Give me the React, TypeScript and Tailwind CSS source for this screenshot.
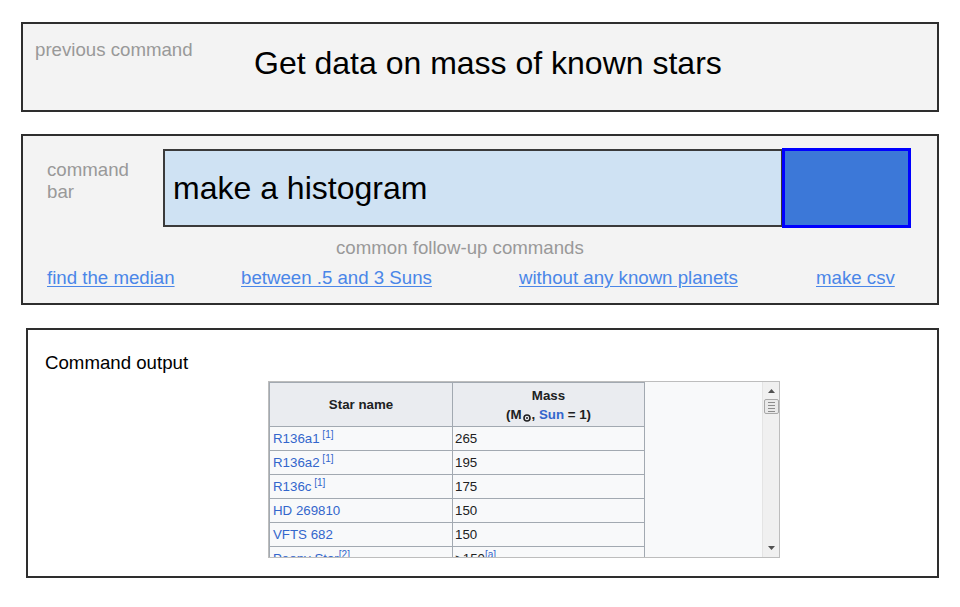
import React from "react";

const stars = [
  { name: "R136a1", ref: " [1]", mass: "265", note: "" },
  { name: "R136a2", ref: " [1]", mass: "195", note: "" },
  { name: "R136c", ref: " [1]", mass: "175", note: "" },
  { name: "HD 269810", ref: "", mass: "150", note: "" },
  { name: "VFTS 682", ref: "", mass: "150", note: "" },
  { name: "Peony Star", ref: "[2]", mass: ">150", note: "[a]" },
];

function Scrollbar() {
  return (
    <div className="w-[17px] bg-[#f0f0f0] border-l border-[#e4e4e4] flex flex-col items-center">
      <svg className="mt-[7px]" width="7" height="4" viewBox="0 0 7 4">
        <path d="M0 4 L3.5 0 L7 4 Z" fill="#505050" />
      </svg>
      <div className="mt-[6px] w-[15px] h-[15px] rounded-[2px] border border-[#a8a8a8] bg-[#e9e9e9] flex flex-col items-center justify-center gap-[2px]">
        <div className="w-[7px] h-px bg-[#8c8c8c]" />
        <div className="w-[7px] h-px bg-[#8c8c8c]" />
        <div className="w-[7px] h-px bg-[#8c8c8c]" />
        <div className="w-[7px] h-px bg-[#8c8c8c]" />
      </div>
      <div className="flex-1" />
      <svg className="mb-[7px]" width="7" height="4" viewBox="0 0 7 4">
        <path d="M0 0 L3.5 4 L7 0 Z" fill="#505050" />
      </svg>
    </div>
  );
}

function StarTable() {
  return (
    <div className="w-[376px] border-l border-t border-[#a2a9b1] text-[13.3px] text-[#202122]">
      {/* HEADER */}
      <div className="flex h-[44px] bg-[#eaecf0] border-b border-[#a2a9b1] font-bold">
        <div className="w-[183px] border-r border-[#a2a9b1] flex items-center justify-center">
          Star name
        </div>
        <div className="w-[192px] border-r border-[#a2a9b1] flex flex-col items-center justify-center leading-[19px]">
          <span>Mass</span>
          <span>
            (M
            {/* sun symbol */}
            <svg className="inline-block relative top-[3px] mx-px" width="8" height="8" viewBox="0 0 8 8">
              <circle cx="4" cy="4" r="3" fill="none" stroke="#202122" strokeWidth="1.6" />
              <circle cx="4" cy="4" r="1" fill="#202122" />
            </svg>
            , <span className="text-[#3366cc]">Sun</span> = 1)
          </span>
        </div>
      </div>

      {/* ROWS */}
      {stars.map((s) => (
        <div key={s.name} className="flex h-[24px] bg-[#f8f9fa] border-b border-[#a2a9b1]">
          <div className="w-[183px] border-r border-[#a2a9b1] pl-[3px] pt-[4px] leading-[16px] text-[#3366cc] whitespace-pre">
            {s.name}
            <span className="text-[10px] relative -top-[5px]">{s.ref}</span>
          </div>
          <div className="w-[192px] border-r border-[#a2a9b1] pl-[2px] pt-[4px] leading-[16px]">
            {s.mass}
            <span className="text-[10px] relative -top-[5px] text-[#3366cc]">{s.note}</span>
          </div>
        </div>
      ))}
    </div>
  );
}

export default function App() {
  const links = [
    { label: "find the median", w: "w-[194px]" },
    { label: "between .5 and 3 Suns", w: "w-[278px]" },
    { label: "without any known planets", w: "w-[297px]" },
    { label: "make csv", w: "" },
  ];

  return (
    <div className="w-[960px] h-[607px] bg-white pt-[22px] flex flex-col font-['Liberation_Sans',Arial,sans-serif] overflow-hidden">
      {/* PREVIOUS COMMAND */}
      <div className="ml-[21px] w-[918px] h-[90px] bg-[#f3f3f3] border-2 border-[#2e2e2e] flex items-start">
        <div className="ml-[12px] w-[219px] pt-[15px] text-[18.67px] leading-[22px] text-[#999999]">
          previous command
        </div>
        <div className="pt-[21px] text-[32px] leading-[36px] text-black">
          Get data on mass of known stars
        </div>
      </div>

      {/* COMMAND BAR */}
      <div className="mt-[22px] ml-[21px] w-[918px] h-[171px] bg-[#f3f3f3] border-2 border-[#2e2e2e] pt-[12px] text-[18.67px] leading-[22px]">
        <div className="flex items-center">
          <div className="self-start mt-[11px] ml-[24px] w-[116px] text-[#999999]">
            command
            <br />
            bar
          </div>
          <div className="w-[620px] h-[78px] bg-[#cfe2f3] border-2 border-[#3a3a3a] pl-[8px] flex items-center text-[32px] leading-[36px] text-black">
            make a histogram
          </div>
          <div className="-ml-[1px] w-[129px] h-[80px] bg-[#3c78d8] border-[3px] border-[#0000ff]" />
        </div>

        <div className="mt-[9px] ml-[313px] text-[#999999]">common follow-up commands</div>

        {/* FOLLOW-UPS */}
        <div className="mt-[8px] ml-[24px] flex">
          {links.map((l) => (
            <div key={l.label} className={l.w}>
              <a href="#" className="text-[#4a86e8] underline underline-offset-[2px]">
                {l.label}
              </a>
            </div>
          ))}
        </div>
      </div>

      {/* OUTPUT */}
      <div className="mt-[23px] ml-[26px] w-[913px] h-[250px] bg-white border-2 border-[#2e2e2e] pt-[22px] pl-[17px]">
        <div className="text-[18.67px] leading-[22px] text-black">Command output</div>
        <div className="mt-[7px] ml-[223px] w-[512px] h-[177px] border border-[#bdbdbd] bg-[#f8f9fa] flex overflow-hidden">
          <StarTable />
          <div className="flex-1" />
          <Scrollbar />
        </div>
      </div>
    </div>
  );
}
